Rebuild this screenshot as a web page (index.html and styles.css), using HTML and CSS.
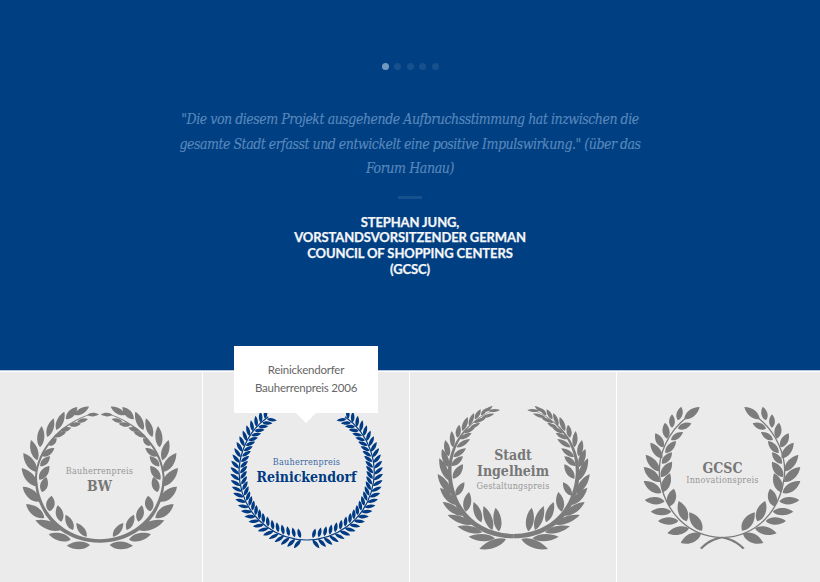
FILE: index.html
```html
<!DOCTYPE html>
<html lang="de">
<head>
<meta charset="utf-8">
<title>Auszeichnungen</title>
<link rel="stylesheet" href="styles.css">
</head>
<body>
<section class="quote">
  <div class="dots"><i class="dot active"></i><i class="dot"></i><i class="dot"></i><i class="dot"></i><i class="dot"></i></div>
  <blockquote class="text"><span class="l1">"Die von diesem Projekt ausgehende Aufbruchsstimmung hat inzwischen die</span><br><span class="l2">gesamte Stadt erfasst und entwickelt eine positive Impulswirkung." (über das</span><br><span class="l3">Forum Hanau)</span></blockquote>
  <div class="rule"></div>
  <p class="author">STEPHAN JUNG,<br>VORSTANDSVORSITZENDER GERMAN<br>COUNCIL OF SHOPPING CENTERS<br>(GCSC)</p>
</section>
<section class="awards">
  <article class="award">
    <svg class="wreath" id="w1" viewBox="-3 0 540 495"></svg>
    <div class="label bw"><small>Bauherrenpreis</small><b>BW</b></div>
  </article>
  <article class="award current">
    <svg class="wreath" id="w2" viewBox="-12 165 540 495"></svg>
    <div class="label"><small>Bauherrenpreis</small><b>Reinickendorf</b></div>
    <div class="tip">Reinickendorfer<br>Bauherrenpreis 2006</div>
  </article>
  <article class="award">
    <svg class="wreath" id="w3" viewBox="-6 0 540 495"></svg>
    <div class="label three"><b>Stadt</b><b>Ingelheim</b><small>Gestaltungspreis</small></div>
  </article>
  <article class="award">
    <svg class="wreath" id="w4" viewBox="-2 0 540 495"></svg>
    <div class="label gcsc"><b>GCSC</b><small>Innovationspreis</small></div>
  </article>
</section>
<script src="wreaths.js"></script>
</body>
</html>
```
FILE: styles.css
```css
* { box-sizing: border-box; }
body { margin: 0; width: 820px; height: 582px; overflow: hidden; background: #fff; }
.quote { height: 371px; background: #003f82; border-bottom: 1px solid #b4c2dc; display: flex; flex-direction: column; align-items: center; padding-top: 63px; text-align: center; }
.dots { display: flex; gap: 5.5px; height: 7px; }
.dot { width: 7px; height: 7px; border-radius: 50%; background: #16508d; }
.dot.active { background: #7398c2; }
.text { margin: 37px 0 0; font: italic 14px/24.5px "DejaVu Serif Condensed", "DejaVu Serif", serif; font-stretch: condensed; color: #5888bc; -webkit-text-stroke: .15px #5888bc; white-space: nowrap; }
.text .l1 { letter-spacing: -.47px; }
.text .l2 { letter-spacing: -.49px; }
.text .l3 { letter-spacing: -.4px; }
.rule { width: 24px; height: 3px; background: #16508d; margin-top: 15.5px; }
.author { margin: 15.5px 0 0; font: 700 13px/15.7px Lato, sans-serif; letter-spacing: -.11px; color: #f4f6f8; -webkit-text-stroke: .25px #f4f6f8; }
.awards { margin: 1px 0 0 -4px; width: 827px; height: 210px; display: grid; grid-template-columns: repeat(4, 206px); gap: 1px; }
.award { position: relative; background: #ebebeb; padding: 23px 13px; display: grid; color: #777; }
.wreath { grid-area: 1 / 1; width: 180px; height: 165px; fill: #7c7c7c; }
.label { grid-area: 1 / 1; height: 165px; padding-top: 61px; display: flex; flex-direction: column; align-items: center; font: 14px/16px "DejaVu Serif Condensed", "DejaVu Serif", serif; font-stretch: condensed; white-space: nowrap; }
.label b { font-size: 14px; line-height: 16px; }
.label small { font-size: 9px; line-height: 13px; letter-spacing: .21px; color: #979797; }
.current { color: #003b84; z-index: 1; }
.current .wreath { fill: #003b84; }
.current .label { padding-left: 1px; }
.current small { color: #3c6aa5; }
.label.bw { padding-top: 70px; padding-left: 1px; }
.label.three { padding-top: 52px; }
.label.three small { line-height: 15px; }
.label.gcsc { padding-top: 65px; padding-left: 5px; }
.label.gcsc small { line-height: 9px; letter-spacing: .25px; }
.tip { position: absolute; left: 31px; top: -26px; width: 144px; height: 67px; padding-top: 15px; background: #fff; color: #666; font: 11.5px/18px Lato, sans-serif; letter-spacing: -.22px; text-align: center; }
.tip::after { content: ""; position: absolute; left: 62px; top: 67px; border: 10px solid transparent; border-top-color: #fff; border-bottom: 0; }
```
FILE: wreaths.js
```js
// Leaf: [base x, base y, tip x, tip y, width]
const leafPath = ([x, y, u, v, w]) => {
  const dx = u - x, dy = v - y, l = Math.hypot(dx, dy), nx = -dy / l * w * .68, ny = dx / l * w * .68;
  const p = (t, s) => (x + dx * t + nx * s).toFixed(1) + ' ' + (y + dy * t + ny * s).toFixed(1);
  return `M${x} ${y}C${p(.22, 1)} ${p(.68, 1)} ${u} ${v}C${p(.68, -1)} ${p(.22, -1)} ${x} ${y}Z`;
};
const draw = (id, axis, leaves, stem, extra = '') => {
  const half = `<path d="${leaves.map(leafPath).join('')}"/>${stem}`;
  document.getElementById(id).innerHTML = `<g>${half}</g><g transform="translate(${axis * 2} 0) scale(-1 1)">${half}</g>${extra}`;
};

draw('w1', 269.5, [
  [240,450,170,452,23],[182,434,116,418,23],[153,405,76,376,25],[103,369,48,328,26],[90,320,38,275,27],[82,274,35,219,26],
  [80,231,40,174,25],[82,196,63,135,21],[90,157,95,93,21],[112,126,131,70,19],[139,105,163,50,20],[168,73,202,36,20],[194,60,237,35,17],[232,59,267,58,11],
  [202,80,234,72,12],[178,91,213,86,13],[150,108,184,98,13],[131,126,168,112,13],[118,152,140,130,15],[97,184,133,159,18],[91,214,120,184,18],
  [88,254,118,212,22],[96,291,109,246,22],[118,349,125,302,25],[154,380,143,331,22],[189,405,167,359,20],[230,425,199,384,19]
], '<path d="M238 60C150 90 86 170 81 245C83 350 160 430 270 433V443C150 442 73 355 75 245C80 165 145 88 238 58Z"/>');

// Evenly spaced pairs of narrow leaves along the ring
const ring = [];
for (let k = 0; k < 29; k++) {
  const a = (95 + k * 4.9) * Math.PI / 180;
  const x = 260 + 203 * Math.cos(a), y = 397 + 203 * Math.sin(a), t = a + Math.PI / 2;
  const open = Math.max(0, 1 - k / 7) * .45;
  const out = t - .85 - open * .3, inn = t + .8 + open;
  ring.push([x, y, x + 33 * Math.cos(out), y + 33 * Math.sin(out), 10.5]);
  const bx = x + 5 * Math.cos(inn), by = y + 5 * Math.sin(inn);
  ring.push([bx, by, bx + 30 * Math.cos(inn), by + 30 * Math.sin(inn), 10.5]);
}
draw('w2', 260, ring, '<path d="M260 600A203 203 0 0 1 145 230" fill="none" stroke="#003b84" stroke-width="3.5"/>');

draw('w3', 266, [
  [243,432,163,462,24],[210,430,131,425,21],[172,412,97,394,20],[143,388,68,360,20],[113,362,53,321,21],[93,330,45,278,21],[78,296,38,237,21],
  [72,257,43,190,20],[70,216,51,162,18],[71,184,61,135,17],[84,157,80,108,15],[97,128,103,89,15],[112,108,128,66,14],[132,91,147,54,12],[150,73,167,43,12],[168,61,186,39,10],[178,51,203,33,9],[190,48,225,45,9],
  [170,68,208,56,9],[147,83,183,68,10],[134,100,165,84,10],[117,114,151,96,11],[104,132,140,114,13],[95,157,135,132,14],[85,186,123,160,15],[79,213,114,184,17],
  [84,251,114,208,20],[92,302,118,262,18],[122,350,132,291,23],[169,382,146,321,21],[202,405,176,333,23],[222,409,212,338,23]
], '<path d="M200 49C120 85 75 160 80 240C88 345 160 415 266 417V430C150 430 72 350 69 240C67 155 115 85 200 47Z"/>');

draw('w4', 274, [
  [211,416,150,444,27],[175,400,110,415,24],[143,378,82,378,22],[122,350,60,350,21],[102,319,42,315,22],[92,294,39,258,25],[88,261,39,216,25],
  [87,229,45,179,23],[95,190,59,143,22],[98,157,74,115,21],[109,131,103,83,21],[124,98,124,58,17],[142,76,152,35,18],[161,72,207,36,22],
  [142,101,182,85,18],[121,135,157,111,17],[104,174,136,138,19],[94,206,124,172,19],[91,246,124,200,24],[96,292,118,235,25],[116,334,130,281,26],[168,379,144,318,27],[214,407,176,352,28]
], '<path d="M170 65C112 110 80 180 87 245C100 350 170 424 274 428" fill="none" stroke="#7c7c7c" stroke-width="4"/>',
'<path d="M272 425C305 428 324 441 342 459L336 463C320 447 300 435 272 430ZM276 425C243 428 224 441 208 459L214 463C230 447 248 435 276 430Z"/>');
```
